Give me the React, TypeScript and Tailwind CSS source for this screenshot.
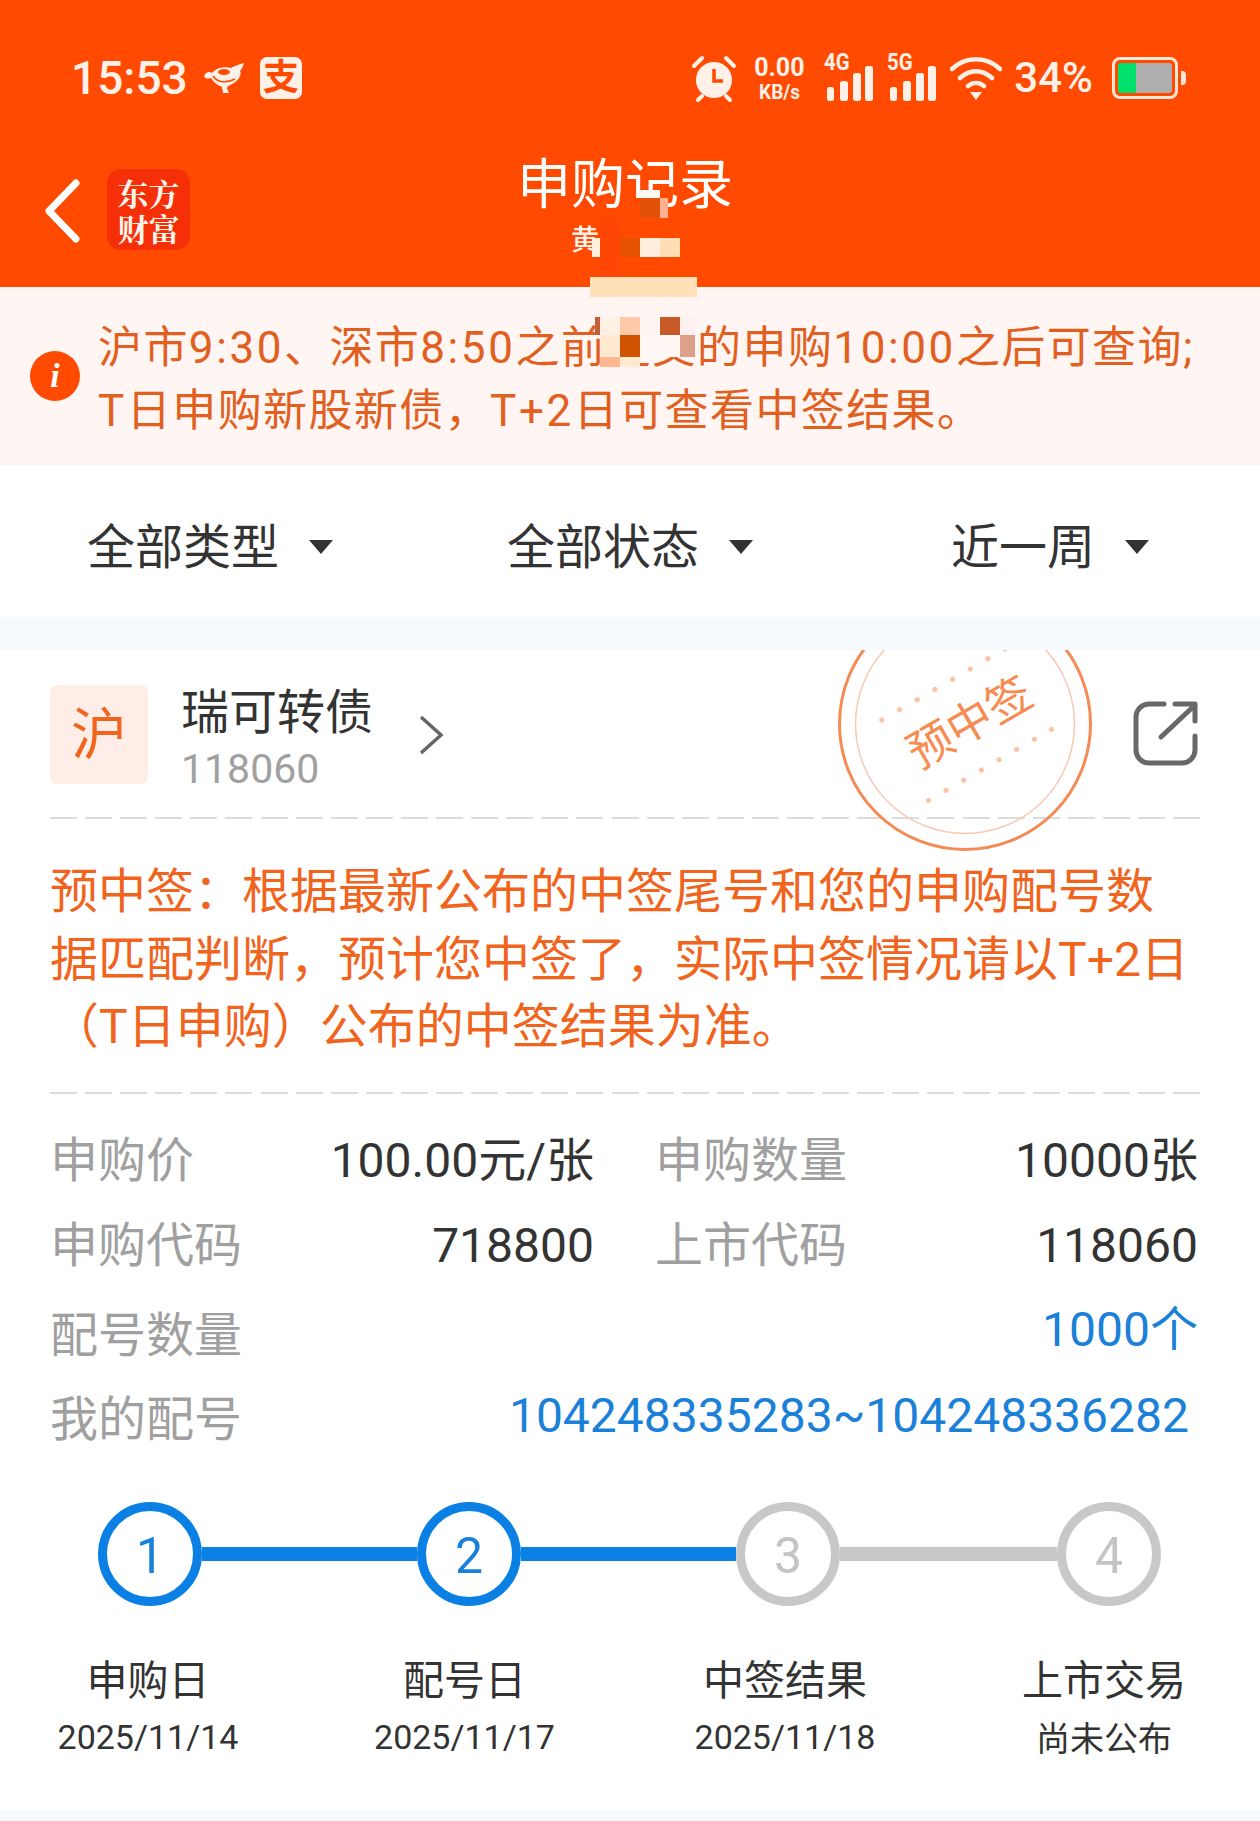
const FONT = "font-['Roboto','Noto_Sans_CJK_SC',sans-serif]";

function Bars({ label }: { label: string }) {
  return (
    <div className="relative w-[50px] h-[50px]">
      <span className="absolute left-0 top-[-5px] text-[24px] leading-[28px] font-bold text-[#fff1e8] font-['Roboto',sans-serif] scale-x-[0.85] origin-left">{label}</span>
      <svg width="50" height="50" viewBox="0 0 50 50" className="absolute left-0 top-0">
        <rect x="3" y="34" width="7" height="14" rx="2.5" fill="#fff1e8" />
        <rect x="16" y="28" width="8" height="20" rx="2.5" fill="#fff1e8" />
        <rect x="29" y="20" width="8" height="28" rx="2.5" fill="#fff1e8" />
        <rect x="41" y="13" width="8" height="35" rx="2.5" fill="#fff1e8" />
      </svg>
    </div>
  );
}

function StatusBar() {
  return (
    <div className="h-[156px] pl-[71px] pr-[74px] pt-[52px] flex items-start justify-between text-[#fff1e8]">
      <div className="flex items-center h-[52px]">
        <span className="text-[46px] leading-[52px] font-medium w-[116px] whitespace-nowrap">15:53</span>
        <svg width="42" height="34" viewBox="0 0 42 34" className="ml-[16px]">
          <path d="M1 15c2-4 5-5 8-3 4-5 12-7 19-5 4-2 8-4 13-5-1 3-2 6-4 8 1 2 1 3 0 5-2 5-7 8-12 10l-1 2 2 5h-6l-1-6c-5-2-9-5-11-9-3 1-6 1-7-2z" fill="#fff1e8" />
          <ellipse cx="21" cy="11" rx="6" ry="3" fill="#ff4a00" />
          <path d="M10 15c4 6 12 8 22 3" stroke="#ff4a00" strokeWidth="1.5" fill="none" />
        </svg>
        <div className="ml-[15px] w-[42px] h-[42px] rounded-[7px] bg-[#fff1e8] flex items-center justify-center">
          <span className="text-[36px] leading-[36px] font-bold text-[#ff4a00]">支</span>
        </div>
      </div>
      <div className="flex items-center h-[52px]">
        <svg width="46" height="50" viewBox="0 0 46 50">
          <circle cx="23" cy="27" r="18" fill="#fff1e8" />
          <path d="M23 16v12h9" stroke="#ff4a00" strokeWidth="3.5" fill="none" />
          <path d="M3 13l8-8M43 13l-8-8M7 47l4-4M39 47l-4-4" stroke="#fff1e8" strokeWidth="4" strokeLinecap="round" />
        </svg>
        <div className="ml-[17px] w-[50px] flex flex-col items-center font-bold">
          <span className="text-[25px] leading-[27px]">0.00</span>
          <span className="text-[20px] leading-[22px] scale-x-[0.95]">KB/s</span>
        </div>
        <div className="ml-[20px]"><Bars label="4G" /></div>
        <div className="ml-[13px]"><Bars label="5G" /></div>
        <svg width="52" height="50" viewBox="0 0 52 50" className="ml-[13px]">
          <path d="M2 16c14-13 34-13 48 0M10 25c10-9 22-9 32 0M18 33c5-4 11-4 16 0" stroke="#fff1e8" strokeWidth="4.5" fill="none" strokeLinecap="round" />
          <path d="M20 39h12l-6 8z" fill="#fff1e8" />
        </svg>
        <span className="ml-[12px] text-[42px] leading-[52px] font-medium whitespace-nowrap">34%</span>
        <div className="ml-[19px] w-[66px] h-[42px] rounded-[8px] border-[3px] border-[#ffe6d6] p-[3px] flex">
          <div className="w-[18px] h-full rounded-l-[3px] bg-[#00e06a]" />
          <div className="flex-1 h-full rounded-r-[3px] bg-[#aeaeae]" />
        </div>
        <div className="ml-[3px] w-[5px] h-[14px] rounded-r-[4px] bg-[#ffe6d6]" />
      </div>
    </div>
  );
}

function Mosaic({ c, className }: { c: string; className: string }) {
  return <div className={`absolute ${c} ${className}`} />;
}

function Header() {
  return (
    <div className="bg-[#ff4a00] h-[287px] text-white">
      <StatusBar />
      <div className="relative h-[131px]">
        <svg width="40" height="66" viewBox="0 0 40 66" className="absolute left-[43px] top-[24px]">
          <path d="M33 5L6 33l27 28" stroke="#ffffff" strokeWidth="7" fill="none" strokeLinecap="round" strokeLinejoin="round" />
        </svg>
        <div className="absolute left-[107px] top-[15px] w-[83px] h-[81px] rounded-[14px] bg-[#f52f08] flex items-center justify-center">
          <span className="w-[64px] text-[31px] leading-[35px] font-bold text-center text-[#fff3ea] font-['Noto_Serif_CJK_SC','Noto_Sans_CJK_SC',sans-serif]">东方财富</span>
        </div>
        <div className="text-center text-[54px] leading-[64px] -mt-[2px] pr-[10px]">申购记录</div>
        <div className="absolute left-[571px] top-[73px] w-[28px] text-[28px] leading-[28px] text-[#fff1e8] font-medium">黄</div>
      </div>
    </div>
  );
}

function L({ children }: { children: string }) {
  return <span className="tracking-[2.6px]">{children}</span>;
}

function Banner() {
  return (
    <div className="relative h-[178px] bg-[#fff6f3] flex items-center pl-[30px]">
      <div className="w-[50px] h-[50px] rounded-full bg-[#ff4a00] flex items-center justify-center">
        <span className="text-[34px] leading-[34px] font-bold italic text-white font-['Liberation_Serif',serif]">i</span>
      </div>
      <div className="ml-[18px] text-[44px] leading-[63px] tracking-[1.4px] text-[#e2601f] whitespace-nowrap mt-[7px]">
        <div>沪市<L>9:30</L>、深市<L>8:50</L>之前提交的申购<L>10:00</L>之后可查询;</div>
        <div><L>T</L>日申购新股新债，<L>T+2</L>日可查看中签结果。</div>
      </div>
    </div>
  );
}

function Filter({ text, className }: { text: string; className: string }) {
  return (
    <div className={`flex items-center ${className}`}>
      <span className="text-[48px] leading-[60px] text-[#333333] whitespace-nowrap">{text}</span>
      <svg width="26" height="16" viewBox="0 0 26 16" className="ml-[29px] -mt-[3px]">
        <path d="M1 1h24L13 15z" fill="#333333" />
      </svg>
    </div>
  );
}

function Filters() {
  return (
    <div className="h-[152px] bg-white flex items-center pt-[14px]">
      <Filter text="全部类型" className="ml-[87px]" />
      <Filter text="全部状态" className="ml-[173px]" />
      <Filter text="近一周" className="ml-[197px]" />
    </div>
  );
}

function Dash() {
  return <div className="ml-[50px] mr-[59px] w-[1151px] h-[2px] bg-[repeating-linear-gradient(90deg,#dcdcdc_0,#dcdcdc_27px,transparent_27px,transparent_35.1px)]" />;
}

function Stamp() {
  const xs = [-70, -49.6, -29.2, -8.8, 11.6, 32, 52.4, 72];
  return (
    <svg width="260" height="260" viewBox="0 0 260 260" className="absolute left-[835px] top-[-56px]">
      <circle cx="130" cy="130" r="125.5" fill="none" stroke="#f58a55" strokeWidth="3" />
      <circle cx="130" cy="130" r="109.5" fill="none" stroke="#f9c9b2" strokeWidth="1.5" />
      <g transform="rotate(-30 130 130)">
        <text x="135" y="147" textAnchor="middle" fontSize="45" fill="#f78c52" fontFamily="'Noto Sans CJK SC',sans-serif">预中签</text>
        {xs.map((x) => (
          <g key={x}>
            <circle cx={130 + x} cy={85} r="2.6" fill="#f9c4aa" />
            <circle cx={130 + x} cy={178} r="2.6" fill="#f9c4aa" />
          </g>
        ))}
      </g>
    </svg>
  );
}

function StockRow() {
  return (
    <div className="relative h-[167px] pl-[50px] pt-[35px] flex items-start">
      <div className="w-[98px] h-[99px] rounded-[7px] bg-[#ffeee8] flex items-center justify-center">
        <span className="text-[56px] leading-[56px] text-[#f0641e]">沪</span>
      </div>
      <div className="ml-[33px] -mt-[3px]">
        <div className="text-[48px] leading-[62px] text-[#333333] whitespace-nowrap">瑞可转债</div>
        <div className="text-[41px] leading-[50px] text-[#a0a0a0]">118060</div>
      </div>
      <svg width="26" height="42" viewBox="0 0 26 42" className="ml-[45px] mt-[29px]">
        <path d="M3 3l20 18L3 39" stroke="#666666" strokeWidth="3.5" fill="none" />
      </svg>
      <Stamp />
      <svg width="66" height="66" viewBox="0 0 66 66" className="absolute left-[1133px] top-[50px]">
        <path d="M31 4H16A13 13 0 0 0 3 17v33a13 13 0 0 0 13 13h33a13 13 0 0 0 13-13V36" stroke="#686868" strokeWidth="5" fill="none" strokeLinecap="round" />
        <path d="M28 37L62 5M42 4h20v17" stroke="#686868" strokeWidth="5" fill="none" strokeLinecap="round" strokeLinejoin="round" />
      </svg>
    </div>
  );
}

function Notice() {
  return (
    <div className="h-[273px] pl-[50px] pt-[39px] text-[48px] leading-[68.5px] text-[#f0641e] whitespace-nowrap">
      <div>预中签：根据最新公布的中签尾号和您的申购配号数</div>
      <div className="-mt-[1px]">据匹配判断，预计您中签了，实际中签情况请以T+2日</div>
      <div className="ml-[1px] -mt-[1px]">（T日申购）公布的中签结果为准。</div>
    </div>
  );
}

function Cell({ label, value, className }: { label: string; value: string; className: string }) {
  return (
    <div className={`flex justify-between items-center ${className}`}>
      <span className="text-[48px] text-[#a0a0a0] whitespace-nowrap">{label}</span>
      <span className="text-[48px] text-[#333333] whitespace-nowrap">{value}</span>
    </div>
  );
}

function Info() {
  return (
    <div className="pt-[24px] pl-[50px] pr-[62px] leading-[84px]">
      <div className="flex h-[85px]">
        <Cell label="申购价" value="100.00元/张" className="w-[544px]" />
        <Cell label="申购数量" value="10000张" className="ml-[61px] w-[543px]" />
      </div>
      <div className="flex h-[85px]">
        <Cell label="申购代码" value="718800" className="w-[544px]" />
        <Cell label="上市代码" value="118060" className="ml-[61px] w-[543px]" />
      </div>
      <div className="flex justify-between items-center h-[89px] text-[48px] whitespace-nowrap">
        <span className="text-[#a0a0a0] mt-[6px]">配号数量</span>
        <span className="text-[#1a80d8] -mt-[5px]">1000个</span>
      </div>
      <div className="flex justify-between items-center h-[85px] text-[48px] whitespace-nowrap">
        <span className="text-[#a0a0a0]">我的配号</span>
        <span className="text-[#1a80d8] mr-[9px] -mt-[7px]">104248335283~104248336282</span>
      </div>
    </div>
  );
}

function Node({ n, on }: { n: number; on: boolean }) {
  return (
    <div
      className={
        on
          ? "w-[104px] h-[104px] rounded-full border-[9px] border-[#0a80e4] bg-white flex items-center justify-center shrink-0"
          : "w-[104px] h-[104px] rounded-full border-[9px] border-[#c8c8c8] bg-white flex items-center justify-center shrink-0"
      }
    >
      <span className={on ? "text-[50px] leading-[50px] mt-[3px] text-[#1a80d8]" : "text-[50px] leading-[50px] mt-[3px] text-[#c4c4c4]"}>{n}</span>
    </div>
  );
}

function Steps() {
  const cols = [
    { t: "申购日", d: "2025/11/14", cls: "w-[320px]" },
    { t: "配号日", d: "2025/11/17", cls: "w-[313px]" },
    { t: "中签结果", d: "2025/11/18", cls: "w-[328px]" },
    { t: "上市交易", d: "尚未公布", cls: "w-[310px]" },
  ];
  return (
    <div>
      <div className="mt-[40px] ml-[98px] flex items-center h-[104px]">
        <Node n={1} on />
        <div className="w-[215px] h-[14px] bg-[#0a80e4]" />
        <Node n={2} on />
        <div className="w-[215px] h-[14px] bg-[#0a80e4]" />
        <Node n={3} on={false} />
        <div className="w-[217px] h-[14px] bg-[#c8c8c8]" />
        <Node n={4} on={false} />
      </div>
      <div className="ml-[-12px] mt-[47px] flex">
        {cols.map((c, i) => (
          <div key={i} className={`${c.cls} shrink-0 flex flex-col items-center text-[#333333] whitespace-nowrap`}>
            <div className="text-[41px] leading-[56px]">{c.t}</div>
            <div className={i === 3 ? "text-[34px] leading-[56px] pt-[2px]" : "text-[34px] leading-[57px]"}>{c.d}</div>
          </div>
        ))}
      </div>
    </div>
  );
}

export default function App() {
  return (
    <div className={`relative w-[1260px] h-[1821px] overflow-hidden bg-[#f6faff] ${FONT}`}>
      <Header />
      <Banner />
      <Filters />
      <div className="h-[33px]" />
      <div className="relative bg-white h-[1160px] overflow-hidden">
        <StockRow />
        <Dash />
        <Notice />
        <Dash />
        <Info />
        <Steps />
      </div>
      <Mosaic c="bg-[#ff4a00]" className="left-[620px] top-[198px] w-[20px] h-[40px]" />
      <Mosaic c="bg-[#fff8ee]" className="left-[640px] top-[190px] w-[20px] h-[8px]" />
      <Mosaic c="bg-[#e05208]" className="left-[640px] top-[198px] w-[20px] h-[20px]" />
      <Mosaic c="bg-[#ffb090]" className="left-[660px] top-[198px] w-[8px] h-[20px]" />
      <Mosaic c="bg-[#ff4604]" className="left-[600px] top-[218px] w-[20px] h-[59px]" />
      <Mosaic c="bg-[#ff4a00]" className="left-[620px] top-[218px] w-[60px] h-[59px]" />
      <Mosaic c="bg-[#fff0e0]" className="left-[592px] top-[238px] w-[8px] h-[19px]" />
      <Mosaic c="bg-[#e65200]" className="left-[620px] top-[238px] w-[20px] h-[19px]" />
      <Mosaic c="bg-[#ffeedd]" className="left-[640px] top-[238px] w-[20px] h-[19px]" />
      <Mosaic c="bg-[#ffddb5]" className="left-[660px] top-[238px] w-[20px] h-[19px]" />
      <Mosaic c="bg-[#ffe0b8]" className="left-[590px] top-[277px] w-[107px] h-[20px]" />
      <Mosaic c="bg-[#c0613a]" className="left-[595px] top-[317px] w-[5px] h-[18px]" />
      <Mosaic c="bg-[#fff0e4]" className="left-[600px] top-[317px] w-[20px] h-[18px]" />
      <Mosaic c="bg-[#ffc8a8]" className="left-[620px] top-[317px] w-[20px] h-[18px]" />
      <Mosaic c="bg-[#ffe9d0]" className="left-[600px] top-[335px] w-[20px] h-[22px]" />
      <Mosaic c="bg-[#cf5300]" className="left-[620px] top-[335px] w-[20px] h-[22px]" />
      <Mosaic c="bg-[#ffb890]" className="left-[600px] top-[357px] w-[20px] h-[10px]" />
      <Mosaic c="bg-[#ffe9d0]" className="left-[620px] top-[357px] w-[20px] h-[10px]" />
      <Mosaic c="bg-[#fff6f3]" className="left-[640px] top-[317px] w-[20px] h-[18px]" />
      <Mosaic c="bg-[#c85a2a]" className="left-[660px] top-[317px] w-[20px] h-[18px]" />
      <Mosaic c="bg-[#fcf0f0]" className="left-[680px] top-[317px] w-[15px] h-[18px]" />
      <Mosaic c="bg-[#fff8f5]" className="left-[640px] top-[335px] w-[40px] h-[22px]" />
      <Mosaic c="bg-[#dda08a]" className="left-[680px] top-[335px] w-[15px] h-[22px]" />
    </div>
  );
}
